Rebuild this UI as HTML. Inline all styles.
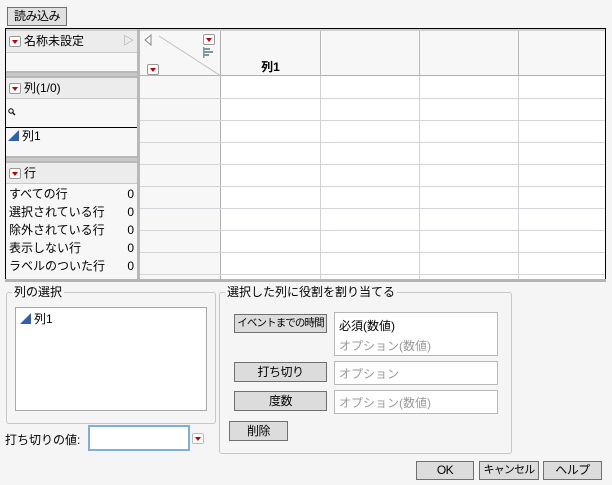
<!DOCTYPE html>
<html><head><meta charset="utf-8"><style>
*{box-sizing:border-box;margin:0;padding:0}
html,body{width:612px;height:485px;overflow:hidden}
body{background:#f5f5f5;font-family:"Liberation Sans","Noto Sans CJK JP",sans-serif;font-size:12px;color:#000;position:relative;white-space:nowrap}
.a{position:absolute}
.btn{position:absolute;background:#dcdcdc;border:1px solid #707070;text-align:center;font-size:12px;line-height:17px;white-space:nowrap;letter-spacing:-0.5px}
.btn span{display:inline-block}
.hdr{position:absolute;left:6px;width:131px;height:21px;background:#ececec;border-bottom:1px solid #c8c8c8;line-height:20px;font-size:12px}
.dd{position:absolute;width:12px;height:11px;border:1px solid #999;background:#fff;border-radius:2px}
.dd:after{content:"";position:absolute;left:2px;top:3px;border-left:3px solid transparent;border-right:3px solid transparent;border-top:4px solid #c00000}
.sep{position:absolute;left:6px;width:131px;background:#c4c4c4}
.vl{position:absolute;top:31px;width:1px;height:249px;background:#d0d0d8}
.hl{position:absolute;left:140px;width:465px;height:1px;background:#d4d4dc}
.fs{position:absolute;border:1px solid #c8c8c8;border-radius:3px}
.lg{position:absolute;background:#f5f5f5;padding:0 2px;font-size:12px;line-height:14px}
.box{position:absolute;background:#fff;border:1px solid #b8b8b8}
.tri{display:inline-block;width:0;height:0;border-left:11px solid transparent;border-bottom:11px solid #2e5fb0;vertical-align:-1px;margin-right:3px}
.gray{color:#9a9a9a}
</style></head><body>
<div class="btn" style="left:7px;top:7px;width:60px;height:19px;background:#e0e0e0">読み込み</div>

<div class="a" style="left:5px;top:28px;width:601px;height:254px;border:1px solid #000;border-bottom:none;background:#f7f7f7"></div>
<div class="a" style="left:6px;top:29px;width:599px;height:2px;background:#d0d0d0"></div>
<div class="a" style="left:137px;top:29px;width:3px;height:253px;background:#b8b8b8"></div>
<div class="a" style="left:5px;top:279px;width:601px;height:3px;background:#b4b4b4"></div>

<div class="hdr" style="top:31px;height:22px;line-height:21px"><div class="dd" style="left:3px;top:5px"></div><span style="position:absolute;left:18px">名称未設定</span><span style="position:absolute;right:3px;top:0;color:#999;font-size:11px">▷</span></div>
<div class="sep" style="top:71px;height:7px;background:#c8c8c8;border-top:2px solid #b8b8b8;border-bottom:2px solid #b8b8b8"></div>
<div class="hdr" style="top:78px"><div class="dd" style="left:3px;top:5px"></div><span style="position:absolute;left:18px">列(1/0)</span></div>
<svg class="a" style="left:8px;top:108px" width="8" height="8"><circle cx="3" cy="3" r="2.2" fill="none" stroke="#000" stroke-width="1"/><line x1="4.5" y1="4.5" x2="7" y2="7" stroke="#000" stroke-width="1.3"/></svg>
<div class="a" style="left:6px;top:127px;width:131px;height:1px;background:#000"></div>
<div class="a" style="left:8px;top:129px;line-height:14px"><span class="tri"></span>列1</div>
<div class="sep" style="top:156px;height:7px;background:#c8c8c8;border-top:2px solid #b8b8b8;border-bottom:2px solid #b8b8b8"></div>
<div class="hdr" style="top:163px"><div class="dd" style="left:3px;top:5px"></div><span style="position:absolute;left:18px">行</span></div>
<div class="a" style="left:9px;top:185px;width:125px;line-height:18px">
<div>すべての行<span style="float:right">0</span></div>
<div>選択されている行<span style="float:right">0</span></div>
<div>除外されている行<span style="float:right">0</span></div>
<div>表示しない行<span style="float:right">0</span></div>
<div>ラベルのついた行<span style="float:right">0</span></div>
</div>

<div class="a" style="left:221px;top:76px;width:384px;height:203px;background:#fff"></div>
<div class="a" style="left:140px;top:76px;width:81px;height:203px;background:#f7f7f7"></div>
<div class="a" style="left:140px;top:75px;width:465px;height:1px;background:#b0b0b0"></div>
<div class="vl" style="left:220px;background:#b0b0b0"></div>
<div class="vl" style="left:320px;background:#b8b8b8;height:45px"></div>
<div class="vl" style="left:419px;background:#b8b8b8;height:45px"></div>
<div class="vl" style="left:518px;background:#b8b8b8;height:45px"></div>
<div class="vl" style="left:320px;top:76px;height:203px"></div>
<div class="vl" style="left:419px;top:76px;height:203px"></div>
<div class="vl" style="left:518px;top:76px;height:203px"></div>
<div class="hl" style="top:98px"></div><div class="hl" style="top:120px"></div><div class="hl" style="top:142px"></div>
<div class="hl" style="top:164px"></div><div class="hl" style="top:186px"></div><div class="hl" style="top:208px"></div>
<div class="hl" style="top:230px"></div><div class="hl" style="top:252px"></div><div class="hl" style="top:274px"></div>
<svg class="a" style="left:140px;top:31px" width="81" height="45"><line x1="19" y1="5" x2="81" y2="45" stroke="#c0c0c0"/><path d="M11 4 L5 9 L11 14 Z" fill="none" stroke="#888"/><g fill="#7a9aa0"><rect x="63" y="16" width="1.5" height="11"/><rect x="64" y="17" width="6" height="2"/><rect x="64" y="20" width="9" height="2"/><rect x="64" y="23" width="5" height="2"/></g></svg>
<div class="dd" style="left:203px;top:34px"></div>
<div class="dd" style="left:147px;top:64px"></div>
<div class="a" style="left:221px;top:58px;width:99px;text-align:center;font-weight:bold">列1</div>

<div class="fs" style="left:6px;top:292px;width:210px;height:132px"></div>
<div class="lg" style="left:12px;top:285px">列の選択</div>
<div class="box" style="left:15px;top:307px;width:192px;height:104px;border-color:#a8a8a8"><div style="position:absolute;left:4px;top:4px;line-height:14px"><span class="tri"></span>列1</div></div>
<div class="a" style="left:5px;top:431px">打ち切りの値:</div>
<div class="a" style="left:88px;top:425px;width:102px;height:26px;background:#fff;border:2px solid #7eaee0"></div>
<div class="dd" style="left:192px;top:433px;border-color:#bbb"></div>

<div class="fs" style="left:219px;top:292px;width:293px;height:162px"></div>
<div class="lg" style="left:225px;top:285px">選択した列に役割を割り当てる</div>
<div class="btn" style="left:234px;top:314px;width:93px;height:19px;font-size:10.5px;letter-spacing:-0.9px;line-height:17px">イベントまでの時間</div>
<div class="box" style="left:334px;top:312px;width:164px;height:44px"><div style="position:absolute;left:4px;top:3px;line-height:20px">必須(数値)<br><span class="gray">オプション(数値)</span></div></div>
<div class="btn" style="left:234px;top:362px;width:93px;height:20px;line-height:18px">打ち切り</div>
<div class="box" style="left:334px;top:361px;width:164px;height:24px"><div class="gray" style="position:absolute;left:4px;top:3px">オプション</div></div>
<div class="btn" style="left:234px;top:391px;width:93px;height:20px;line-height:18px">度数</div>
<div class="box" style="left:334px;top:390px;width:164px;height:24px"><div class="gray" style="position:absolute;left:4px;top:3px">オプション(数値)</div></div>
<div class="btn" style="left:229px;top:421px;width:59px;height:20px;line-height:18px">削除</div>

<div class="btn" style="left:416px;top:461px;width:58px;height:19px">OK</div>
<div class="btn" style="left:479px;top:461px;width:60px;height:19px;font-size:11px;letter-spacing:-0.8px">キャンセル</div>
<div class="btn" style="left:543px;top:461px;width:59px;height:19px">ヘルプ</div>
</body></html>
